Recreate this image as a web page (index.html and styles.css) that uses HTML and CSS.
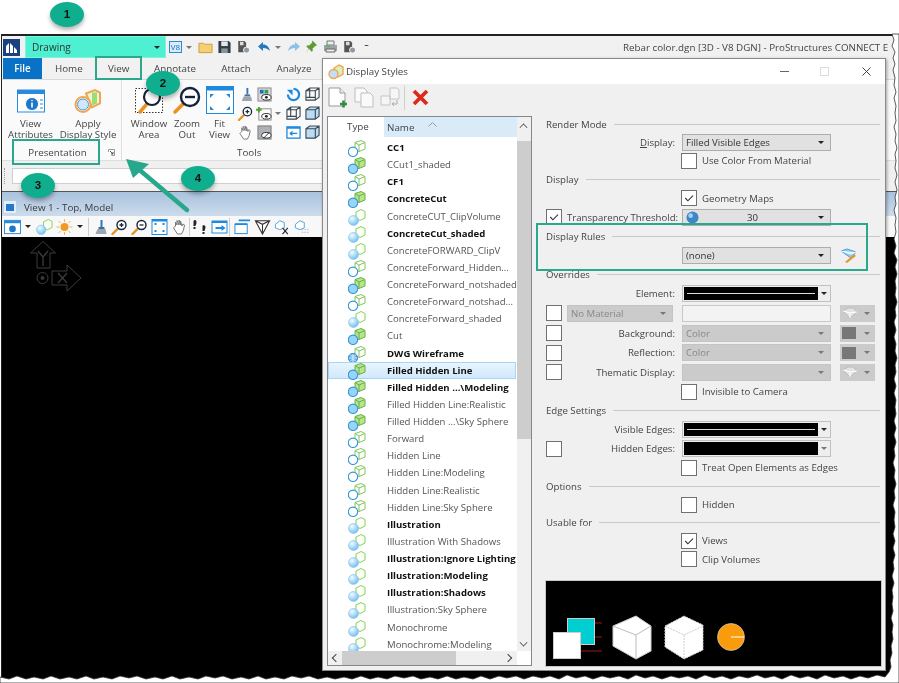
FILE: index.html
```html
<!DOCTYPE html>
<html lang="en">
<head>
<meta charset="utf-8">
<title>Display Styles</title>
<link rel="stylesheet" href="styles.css">
</head>
<body>
<svg class="defs" width="0" height="0">
  <defs>
    <radialGradient id="ball" cx="35%" cy="30%" r="75%"><stop offset="0" stop-color="#f4fbff"/><stop offset="1" stop-color="#6fbdf0"/></radialGradient>
    <symbol id="ds-a" viewBox="0 0 18 17"><path d="M7 2.500 13 .5l4 2v6.500l-6 2.500-4-2zM7 2.500l4 2.500 6-2.500M11 5v6.500" fill="#fff" stroke="#7fc65a"/><circle cx="5" cy="11.800" r="4.700" fill="#fff" stroke="#2f97dc" stroke-width="1.100"/></symbol>
    <symbol id="ds-b" viewBox="0 0 18 17"><path d="M7 2.500 13 .5l4 2v6.500l-6 2.500-4-2z" fill="#b7e58d" stroke="#68b045"/><path d="M7 2.500l4 2.500 6-2.500M11 5v6.500" fill="none" stroke="#68b045"/><circle cx="5" cy="11.800" r="4.700" fill="#9bd3f6" stroke="#2f97dc" stroke-width="1.100"/></symbol>
    <symbol id="ds-c" viewBox="0 0 18 17"><path d="M8 3 13 .5l4 2v6.500l-5 2.500-4-2z" fill="#fbfff6" stroke="#84d05c"/><circle cx="5.500" cy="11.500" r="5" fill="url(#ball)" stroke="#7cc2ee" stroke-width=".6"/></symbol>
    <symbol id="ds-d" viewBox="0 0 18 17"><path d="M7 2.500 13 .5l4 2v6.500l-6 2.500-4-2zM7 2.500l4 2.500 6-2.500M11 5v6.500" fill="#fff" stroke="#7fc65a"/><circle cx="5" cy="12" r="4.600" fill="#5fb0ea" stroke="#1f80c8"/><path d="M.5 12h9M5 7.500v9M2 8.800c2 2 4 2 6 0M2 15.200c2-2 4-2 6 0" fill="none" stroke="#fff" stroke-width=".7"/></symbol>
    <symbol id="gear-doc" viewBox="0 0 16 16"><path d="M2 1h7l2 2v11H2z" fill="#555"/><rect x="4" y="2" width="4" height="4" fill="#ddd"/><circle cx="11.500" cy="11.500" r="3.500" fill="#8f9aa5" stroke="#fff"/></symbol>
    <symbol id="cube-blue" viewBox="0 0 16 16"><path d="M1 4h10v10H1zM1 4l4-3h10v10l-4 3M11 4l4-3" fill="#bcdcf3" stroke="#3a4a55" stroke-width="1.200"/></symbol>
    <symbol id="cube-wire" viewBox="0 0 16 16"><path d="M1 4h10v10H1zM1 4l4-3h10v10l-4 3M11 4l4-3M5 1v10H1M5 11h6" fill="none" stroke="#3a4a55" stroke-width="1.200"/></symbol>
    <symbol id="loupe-plus" viewBox="0 0 16 16"><path d="M1 15l5-5" stroke="#ee8f1e" stroke-width="2.400" stroke-linecap="round"/><circle cx="10" cy="6" r="4.500" fill="#fff" stroke="#14233a" stroke-width="1.400"/><path d="M8 6h4M10 4v4" stroke="#14233a" stroke-width="1.300"/></symbol>
    <symbol id="loupe-minus" viewBox="0 0 16 16"><path d="M1 15l5-5" stroke="#ee8f1e" stroke-width="2.400" stroke-linecap="round"/><circle cx="10" cy="6" r="4.500" fill="#fff" stroke="#14233a" stroke-width="1.400"/><path d="M8 6h4" stroke="#14233a" stroke-width="1.300"/></symbol>
    <symbol id="brush" viewBox="0 0 16 16"><path d="M9 1h2v7H9z" fill="#2a78c2"/><path d="M7 8h6v2H7z" fill="#4a6c8c"/><path d="M6 10h8l1 5H4z" fill="#9aa7b2"/></symbol>
    <symbol id="hand" viewBox="0 0 16 16"><path d="M4 7V3l1.500 3V1.500L7.500 6V1l1.500 5V2l1.500 5 1-2 1.500 1-1 5-2 4H6L2 9z" fill="#fff" stroke="#777" stroke-linejoin="round"/></symbol>
    <symbol id="gem" viewBox="0 0 16 12"><path d="M1 4l5-3h5l4 4-7 6z" fill="#e3e3e3" stroke="#bcbcbc"/><path d="M1 4l7 2 7-1M8 6v5" fill="none" stroke="#fff"/></symbol>
    <symbol id="checkmark" viewBox="0 0 15 15"><path d="M3.500 7.500l2.800 3 5.500-5.500" fill="none" stroke="#333" stroke-width="1.200"/></symbol>
  </defs>
</svg>

<main class="screen">
  <section class="app">
    <header class="titlebar">
      <svg class="logo" viewBox="0 0 17 17"><rect width="17" height="17" fill="#1c3f7d"/><path d="M3 14V7l3-3v10zM7 14V4l3 3v7zM11 14V8l3 3v3z" fill="#fff"/></svg>
      <div class="workflow"><span>Drawing</span><i class="caret dark"></i></div>
      <div class="quick">
        <span class="v8">V8</span><i class="caret"></i>
        <svg class="qi qi-folder" viewBox="0 0 16 14"><path d="M1 3h5l1 1h8v9H1z" fill="#f6cf72" stroke="#c99d3e"/></svg>
        <svg class="qi" viewBox="0 0 15 15"><path d="M1 1h11l2 2v11H1z" fill="#333c45"/><rect x="4" y="1.500" width="7" height="5" fill="#e6e6e6"/><rect x="4" y="9" width="7" height="5" fill="#8b949c"/></svg>
        <svg class="qi"><use href="#gear-doc"/></svg>
        <svg class="qi qi-undo" viewBox="0 0 14 12"><path d="M6 1 1 5.500 6 10V7c3 0 5 1 7 3-1-4-3-6.500-7-6.500z" fill="#2779bd"/></svg><i class="caret"></i>
        <svg class="qi qi-redo" viewBox="0 0 14 12"><path d="M8 1l5 4.500L8 10V7c-3 0-5 1-7 3 1-4 3-6.500 7-6.500z" fill="#8cc0e6"/></svg>
        <svg class="qi qi-pin" viewBox="0 0 14 15"><path d="M8 .5l5 5-2 1-3 3 .5 2-1.500 1-2.500-3L1 14l3-4.500-2.500-2.500 1-1.500 2 .5 3-3z" fill="#5d9b34"/></svg>
        <svg class="qi" viewBox="0 0 15 14"><path d="M4 1h7v4H4z" fill="#eee" stroke="#777"/><path d="M1 5h13v6H1z" fill="#9aa3aa"/><path d="M3 9h9v3H3z" fill="#eee" stroke="#666"/><path d="M3 6h4" stroke="#5fb53f" stroke-width="1.400"/></svg>
        <svg class="qi"><use href="#gear-doc"/></svg>
        <span class="overflow"></span>
      </div>
      <div class="doc-title">Rebar color.dgn [3D - V8 DGN] - ProStructures CONNECT E</div>
    </header>

    <nav class="tabs">
      <span class="tab file">File</span>
      <span class="tab home">Home</span>
      <span class="tab view">View</span>
      <span class="tab annotate">Annotate</span>
      <span class="tab attach">Attach</span>
      <span class="tab analyze">Analyze</span>
    </nav>

    <div class="ribbon">
      <div class="group presentation">
        <div class="group-body">
          <div class="big w56">
            <svg viewBox="0 0 28 25"><rect x=".5" y="1" width="27" height="22" fill="#fff" stroke="#2a8bdc"/><rect x=".5" y="1" width="27" height="4" fill="#2a8bdc"/><circle cx="15" cy="15" r="6.500" fill="#1e78c8" stroke="#fff"/><path d="M15 13.500v5M15 11v1" stroke="#fff" stroke-width="1.600"/><path d="M23 11h3M23 15h3M23 19h3" stroke="#2a8bdc"/></svg>
            <span>View<br>Attributes</span>
          </div>
          <div class="big w59">
            <svg viewBox="0 0 28 26"><path d="M12 5l9-3.500 5 2.500v11l-8 4z" fill="#eaf6d9" stroke="#f2a64f" stroke-width="2"/><path d="M18 4h5v11l-5 2z" fill="#9fdc72"/><circle cx="9" cy="16" r="7.500" fill="#fff" stroke="#f2a64f" stroke-width="2"/><circle cx="9" cy="16" r="5.500" fill="#cfe8fb" stroke="#3e9be0"/></svg>
            <span>Apply<br>Display Style</span>
          </div>
        </div>
        <div class="group-label">Presentation<svg class="launcher" viewBox="0 0 7 7"><path d="M.5 3V.5h6v6H3.500" fill="none" stroke="#999"/><path d="M2 2l3 3M5 3v2H3" fill="none" stroke="#555"/></svg></div>
      </div>
      <div class="group tools">
        <div class="group-body">
          <div class="big w40">
            <svg viewBox="0 0 28 28"><rect x=".5" y="2.500" width="27" height="24" fill="#fff" stroke="#333" stroke-dasharray="1.500 1.500"/><path d="M5 26l6-7" stroke="#ee8f1e" stroke-width="3.500" stroke-linecap="round"/><circle cx="17" cy="11" r="8" fill="#fff" stroke="#14233a" stroke-width="2.200"/></svg>
            <span>Window<br>Area</span>
          </div>
          <div class="big w34">
            <svg viewBox="0 0 28 28"><path d="M2 26l8-8" stroke="#ee8f1e" stroke-width="3.500" stroke-linecap="round"/><circle cx="17" cy="11" r="9" fill="#fff" stroke="#14233a" stroke-width="2.400"/><path d="M12 11h10" stroke="#14233a" stroke-width="2.400"/></svg>
            <span>Zoom<br>Out</span>
          </div>
          <div class="big w32">
            <svg viewBox="0 0 28 28"><rect x=".5" y=".5" width="27" height="27" fill="#fff" stroke="#1e8ade"/><rect x=".5" y=".5" width="27" height="4" fill="#1e8ade"/><path d="M4 8l4 0-4 4zM24 8h-4l4 4zM4 24h4l-4-4zM24 24h-4l4-4z" fill="#1e8ade"/></svg>
            <span>Fit<br>View</span>
          </div>
          <div class="small-grid">
            <svg><use href="#brush"/></svg>
            <svg viewBox="0 0 16 16"><rect x="1" y="1" width="14" height="14" fill="#d9d9d9" stroke="#888"/><rect x="3" y="3" width="4" height="4" fill="#1f6fb5"/><rect x="8" y="3" width="4" height="4" fill="#3d9b58"/><ellipse cx="10" cy="11" rx="5" ry="3" fill="#fff" stroke="#222"/><circle cx="10" cy="11" r="1.500" fill="#222"/></svg>
            <svg><use href="#loupe-plus"/></svg>
            <svg viewBox="0 0 16 16"><rect x="2" y="3" width="13" height="12" fill="#fff" stroke="#888"/><path d="M2 1v6M-1 4h6" stroke="#4ea02c" stroke-width="2"/><ellipse cx="10" cy="11" rx="5" ry="3" fill="#fff" stroke="#222"/><circle cx="10" cy="11" r="1.500" fill="#222"/></svg>
            <svg><use href="#hand"/></svg>
            <svg viewBox="0 0 16 16"><rect x="1" y="1" width="14" height="14" fill="#aeb1b4" stroke="#777"/><ellipse cx="10" cy="11" rx="5" ry="3" fill="#fff" stroke="#222"/><path d="M7 14l6-6" stroke="#222"/></svg>
          </div>
          <i class="caret ribbon-caret"></i>
          <div class="small-grid views">
            <svg viewBox="0 0 16 16"><path d="M8 2a6 6 0 1 1-6 6" fill="none" stroke="#1e8ade" stroke-width="2.400"/><path d="M1 3h6v6z" fill="#1e8ade"/></svg>
            <svg><use href="#cube-wire"/></svg>
            <svg><use href="#cube-wire"/></svg>
            <svg><use href="#cube-blue"/></svg>
            <svg viewBox="0 0 16 16"><rect x="1" y="2" width="14" height="12" fill="#fff" stroke="#1e8ade" stroke-width="1.400"/><rect x="1" y="2" width="14" height="2" fill="#1e8ade"/><path d="M4 9h8M4 9l3-2M4 9l3 2" stroke="#1e8ade" stroke-width="1.400" fill="none"/></svg>
            <svg><use href="#cube-blue"/></svg>
          </div>
        </div>
        <div class="group-label">Tools</div>
      </div>
    </div>

    <div class="command-strip"><span class="grip"></span><div class="command-input"></div></div>

    <div class="view-window">
      <div class="view-title">
        <svg viewBox="0 0 12 12"><rect width="12" height="12" fill="#e3eef8"/><path d="M2 3h8v7H2z" fill="#2578d0"/></svg>
        <span>View 1 - Top, Model</span>
      </div>
      <div class="view-tools">
        <svg class="vt" viewBox="0 0 18 16"><rect x=".5" y="1" width="17" height="14" fill="#fff" stroke="#2a8bdc"/><rect x=".5" y="1" width="17" height="3" fill="#2a8bdc"/><circle cx="9" cy="10" r="3.500" fill="#1e78c8"/></svg><i class="caret dark"></i>
        <svg class="vt"><use href="#ds-c"/></svg>
        <svg class="vt" viewBox="0 0 16 16"><circle cx="8" cy="8" r="4" fill="#f29a21"/><path d="M8 0v3M8 13v3M0 8h3M13 8h3M2 2l2 2M12 12l2 2M14 2l-2 2M2 14l2-2" stroke="#f2b25f"/></svg><i class="caret dark"></i>
        <span class="vsep s1"></span>
        <svg class="vt"><use href="#brush"/></svg>
        <svg class="vt"><use href="#loupe-plus"/></svg>
        <svg class="vt"><use href="#loupe-minus"/></svg>
        <svg class="vt" viewBox="0 0 16 16"><rect x=".5" y=".5" width="15" height="15" fill="#fff" stroke="#1e8ade"/><rect x=".5" y=".5" width="15" height="2" fill="#1e8ade"/><path d="M3 5h2M11 5h2M3 12h2M11 12h2" stroke="#1e8ade" stroke-width="2"/></svg>
        <svg class="vt"><use href="#hand"/></svg>
        <span class="vsep s2"></span>
        <svg class="vt" viewBox="0 0 16 16"><path d="M2 2c1-2 3-1 3 1s-1 3-1 4H2zM2 8h2v2H2zM11 7c0-1 3-1 3 1s-1 3-1 4h-2zM11 13h2v2h-2z" fill="#222"/></svg>
        <svg class="vt" viewBox="0 0 16 16"><rect x=".5" y="2" width="15" height="12" fill="#fff" stroke="#1e8ade"/><rect x=".5" y="2" width="15" height="2" fill="#1e8ade"/><path d="M4 9h7" stroke="#1e8ade" stroke-width="2"/><path d="M10 6l4 3-4 3z" fill="#1e8ade"/></svg>
        <span class="vsep s3"></span>
        <svg class="vt" viewBox="0 0 18 16"><rect x="1" y="5" width="13" height="10" fill="#fff" stroke="#1e8ade"/><path d="M5 1h12M1 5h13" stroke="#1e8ade" stroke-width="2"/></svg>
        <svg class="vt" viewBox="0 0 18 18"><path d="M1 2h16l-8 15zM1 2l8 4 8-4M9 6v11" fill="#fff" stroke="#333" stroke-width="1.200"/></svg>
        <svg class="vt" viewBox="0 0 18 18"><path d="M1 6l5-4 5 2v6l-5 2-5-2z" fill="#fff" stroke="#3e9be0"/><path d="M9 10l6 7M15 10l-6 7" stroke="#222" stroke-width="1.200"/></svg>
        <svg class="vt" viewBox="0 0 18 18"><path d="M1 6l5-4 5 2v6l-5 2-5-2z" fill="#fff" stroke="#3e9be0"/><path d="M8 12h9M8 15h9" stroke="#bbb" stroke-dasharray="2 1"/></svg>
      </div>
      <div class="viewport">
        <svg class="triad" viewBox="0 0 54 52"><g fill="none" stroke="#3c3c3c"><path d="M13 .5 25.500 12H20v15H7V12H.5z"/><path d="M8 10l5 6 5-6M13 16v9" stroke-width="1.300"/><circle cx="12.500" cy="37" r="5.500"/><circle cx="12.500" cy="37" r="1.500" fill="#3c3c3c"/><path d="M22 30h15v-6l14 13-14 13v-6H22z"/><path d="M28 32l9 10M37 32l-9 10" stroke-width="1.300"/></g></svg>
      </div>
    </div>
  </section>

  <section class="dialog">
    <header class="dlg-title">
      <svg viewBox="0 0 16 16"><path d="M6 4l5-3 4 2v7l-5 3z" fill="#d9f0bc" stroke="#f2a64f" stroke-width="1.400"/><circle cx="5.500" cy="10" r="4.500" fill="#bfe1f8" stroke="#f2a64f" stroke-width="1.400"/></svg>
      <span class="dlg-name">Display Styles</span>
      <span class="win-btn min"></span><span class="win-btn max"></span>
      <svg class="win-btn close" viewBox="0 0 9 9"><path d="M.5.500l8 8M8.500.500l-8 8" stroke="#444"/></svg>
    </header>
    <div class="dlg-toolbar">
      <svg viewBox="0 0 20 21"><path d="M1 1h11l5 5v13H1z" fill="#fff" stroke="#9a9a9a"/><path d="M12 1v5h5" fill="#eee" stroke="#9a9a9a"/><path d="M12 17h7M15.500 13.500v7" stroke="#2f8f3b" stroke-width="2.600"/></svg>
      <svg viewBox="0 0 20 21"><path d="M1 1h9l3 3v11H1z" fill="#fafafa" stroke="#bdbdbd"/><path d="M7 6h9l3 3v11H7z" fill="#fafafa" stroke="#bdbdbd"/></svg>
      <svg viewBox="0 0 20 21"><path d="M10 1h7l2 2v9h-9zM1 9h9v9H1z" fill="#f6f6f6" stroke="#c5c5c5"/><path d="M12 17h5v-4M12 17l2-2M12 17l2 2" fill="none" stroke="#aaa"/></svg>
      <span class="tb-sep"></span>
      <svg class="del" viewBox="0 0 17 17"><path d="M2 2l13 13M15 2 2 15" stroke="#dd2a1b" stroke-width="3.800"/></svg>
    </div>
    <div class="dlg-body">
      <div class="style-list">
        <div class="list-main">
          <div class="list-head"><span class="h-type">Type</span><span class="h-name">Name<svg viewBox="0 0 9 5"><path d="M.5 4.500 4.500.5l4 4" fill="none" stroke="#999"/></svg></span></div>
          <ul class="rows">
            <li class="b"><svg><use href="#ds-a"/></svg>CC1</li>
            <li><svg><use href="#ds-b"/></svg>CCut1_shaded</li>
            <li class="b"><svg><use href="#ds-a"/></svg>CF1</li>
            <li class="b"><svg><use href="#ds-b"/></svg>ConcreteCut</li>
            <li><svg><use href="#ds-c"/></svg>ConcreteCUT_ClipVolume</li>
            <li class="b"><svg><use href="#ds-c"/></svg>ConcreteCut_shaded</li>
            <li><svg><use href="#ds-c"/></svg>ConcreteFORWARD_ClipV</li>
            <li><svg><use href="#ds-a"/></svg>ConcreteForward_Hidden...</li>
            <li><svg><use href="#ds-b"/></svg>ConcreteForward_notshaded</li>
            <li><svg><use href="#ds-a"/></svg>ConcreteForward_notshad...</li>
            <li><svg><use href="#ds-c"/></svg>ConcreteForward_shaded</li>
            <li><svg><use href="#ds-b"/></svg>Cut</li>
            <li class="b"><svg><use href="#ds-d"/></svg>DWG Wireframe</li>
            <li class="b sel"><svg><use href="#ds-b"/></svg>Filled Hidden Line</li>
            <li class="b"><svg><use href="#ds-b"/></svg>Filled Hidden ...\Modeling</li>
            <li><svg><use href="#ds-b"/></svg>Filled Hidden Line:Realistic</li>
            <li><svg><use href="#ds-b"/></svg>Filled Hidden ...\Sky Sphere</li>
            <li><svg><use href="#ds-a"/></svg>Forward</li>
            <li><svg><use href="#ds-a"/></svg>Hidden Line</li>
            <li><svg><use href="#ds-a"/></svg>Hidden Line:Modeling</li>
            <li><svg><use href="#ds-a"/></svg>Hidden Line:Realistic</li>
            <li><svg><use href="#ds-a"/></svg>Hidden Line:Sky Sphere</li>
            <li class="b"><svg><use href="#ds-c"/></svg>Illustration</li>
            <li><svg><use href="#ds-c"/></svg>Illustration With Shadows</li>
            <li class="b"><svg><use href="#ds-c"/></svg>Illustration:Ignore Lighting</li>
            <li class="b"><svg><use href="#ds-c"/></svg>Illustration:Modeling</li>
            <li class="b"><svg><use href="#ds-c"/></svg>Illustration:Shadows</li>
            <li><svg><use href="#ds-c"/></svg>Illustration:Sky Sphere</li>
            <li><svg><use href="#ds-c"/></svg>Monochrome</li>
            <li><svg><use href="#ds-c"/></svg>Monochrome:Modeling</li>
          </ul>
        </div>
        <div class="vscroll"><span class="vthumb"></span></div>
        <div class="hscroll"><span class="hthumb"></span></div>
      </div>

      <div class="settings">
        <div class="sec">Render Mode</div>
        <div class="row"><span class="lbl"><u>D</u>isplay:</span><div class="sel-box f">Filled Visible Edges<i class="caret dark"></i></div></div>
        <div class="row"><label class="chk-line f"><span class="cb"></span>Use Color From Material</label></div>
        <div class="sec">Display</div>
        <div class="row"><label class="chk-line f"><span class="cb"><svg><use href="#checkmark"/></svg></span>Geometry Maps</label></div>
        <div class="row"><span class="cb c1"><svg><use href="#checkmark"/></svg></span><span class="lbl">Transparency Threshold:</span><div class="sel-box f center"><svg class="globe" viewBox="0 0 14 14"><circle cx="7" cy="7" r="6.500" fill="#3e86c8"/><circle cx="5" cy="5" r="2.500" fill="#a6d2f2"/></svg>30<i class="caret dark"></i></div></div>
        <div class="sec">Display Rules</div>
        <div class="row"><div class="sel-box f">(none)<i class="caret dark"></i></div>
          <svg class="rule-edit" viewBox="0 0 17 15"><path d="M1 3l6-2 9 3-5 6z" fill="#8fd0f5" stroke="#4c9fd3"/><path d="M1 3l10 3 5-2" fill="#d8f0fc" stroke="#fff"/><path d="M5 14l9-8 2 2-9 7z" fill="#e29a35"/></svg>
        </div>
        <div class="sec">Overrides</div>
        <div class="row"><span class="lbl">Element:</span><div class="line-box f"><span class="swatch lined"></span><i class="caret dark"></i></div></div>
        <div class="row"><span class="cb c1"></span><div class="sel-box dis nomat">No Material<i class="caret"></i></div><div class="blank f"></div><div class="mini"><svg><use href="#gem"/></svg><i class="caret"></i></div></div>
        <div class="row"><span class="cb c1"></span><span class="lbl">Background:</span><div class="sel-box dis f">Color<i class="caret"></i></div><div class="mini"><span class="chip"></span><i class="caret"></i></div></div>
        <div class="row"><span class="cb c1"></span><span class="lbl">Reflection:</span><div class="sel-box dis f">Color<i class="caret"></i></div><div class="mini"><span class="chip"></span><i class="caret"></i></div></div>
        <div class="row"><span class="cb c1"></span><span class="lbl">Thematic Display:</span><div class="sel-box dis f end"><i class="caret"></i></div><div class="mini"><svg><use href="#gem"/></svg><i class="caret"></i></div></div>
        <div class="row"><label class="chk-line f"><span class="cb"></span>Invisible to Camera</label></div>
        <div class="sec">Edge Settings</div>
        <div class="row"><span class="lbl">Visible Edges:</span><div class="line-box f"><span class="swatch lined"></span><i class="caret dark"></i></div></div>
        <div class="row"><span class="cb c1"></span><span class="lbl">Hidden Edges:</span><div class="line-box f"><span class="swatch"></span><i class="caret"></i></div></div>
        <div class="row"><label class="chk-line f"><span class="cb"></span>Treat Open Elements as Edges</label></div>
        <div class="sec">Options</div>
        <div class="row"><label class="chk-line f"><span class="cb"></span>Hidden</label></div>
        <div class="sec">Usable for</div>
        <div class="row"><label class="chk-line f"><span class="cb"><svg><use href="#checkmark"/></svg></span>Views</label></div>
        <div class="row"><label class="chk-line f"><span class="cb"></span>Clip Volumes</label></div>
        <svg class="preview" viewBox="0 0 335 85">
          <rect width="335" height="85" fill="#000"/>
          <path d="M49 42h7M49 56h7M35 70h21" stroke="#a01616"/>
          <rect x="21.500" y="37.500" width="27" height="26" fill="#00cfd1" stroke="#ccc"/>
          <rect x="7.500" y="51.500" width="27" height="26" fill="#fff" stroke="#ccc"/>
          <path d="M67 45l23-10 15 10v25l-15 8-23-13z" fill="#fff" stroke="#ccc"/>
          <path d="M67 45l23 9 15-9M90 54v24" fill="none" stroke="#bbb"/>
          <path d="M119 45l19-10 19 9v25l-19 9-19-12z" fill="#fff" stroke="#ccc" stroke-dasharray="2 1"/>
          <path d="M119 45l19 9 19-9M138 54v24" fill="none" stroke="#ccc" stroke-dasharray="2 1"/>
          <circle cx="185" cy="56" r="13.500" fill="#f89c0e" stroke="#ddd" stroke-width=".6"/>
          <path d="M185 56h13" stroke="#fff"/>
        </svg>
      </div>
    </div>
  </section>

  <svg class="torn" viewBox="0 0 899 683">
    <polygon fill="#fff" stroke="#333" stroke-width=".8" points="892,34 894,40 892,46 895,52 893,58 895,64 893,70 895,78 894,85 896,92 894,98 896,106 895,113 896,121 894,127 896,134 895,141 897,148 895,154 896,161 895,168 897,175 895,182 897,190 895,197 896,204 894,210 896,218 895,225 896,232 894,239 896,246 894,253 897,260 895,267 897,274 895,281 896,288 895,295 897,302 895,309 896,316 894,322 896,330 894,337 896,344 895,351 897,358 895,365 896,372 894,379 896,386 894,393 896,400 895,407 896,414 894,421 896,428 894,435 896,442 894,449 895,456 893,463 895,470 894,477 896,484 894,491 895,498 893,505 895,512 894,520 895,527 893,534 895,541 893,548 895,555 893,562 894,569 892,576 894,583 892,590 893,597 892,604 893,611 891,618 893,625 892,632 893,639 891,646 892,653 890,660 891,667 889,672 885,677 877,675 868,678 860,676 851,679 843,676 834,678 825,675 817,679 808,676 800,678 791,675 782,679 774,676 765,678 757,675 748,678 739,676 731,679 722,676 714,678 705,675 696,679 688,676 679,678 671,676 662,679 653,676 645,678 636,675 628,679 619,676 610,678 602,676 593,679 585,676 576,678 567,675 559,679 550,676 542,678 533,676 524,679 516,676 507,678 499,676 490,679 481,676 473,679 464,677 456,679 447,676 438,679 430,677 421,679 413,676 404,678 395,676 387,679 378,677 370,679 361,676 352,679 344,677 335,679 327,677 318,679 309,676 301,678 292,676 284,679 275,677 266,679 258,676 249,679 241,677 232,679 223,676 215,678 206,676 198,679 189,677 180,679 172,676 163,679 155,677 146,679 137,676 129,678 120,676 112,679 103,677 94,679 86,676 77,679 69,677 60,679 51,676 43,679 34,677 26,679 17,676 9,679 0,677 0,683 899,683 899,34"/>
  </svg>

  <div class="highlight h-view"></div>
  <div class="highlight h-presentation"></div>
  <div class="highlight h-rules"></div>
  <svg class="pointer" viewBox="0 0 70 58"><path d="M63 53 12 10" stroke="#27a88c" stroke-width="4.500" stroke-linecap="round"/><path d="M2 2l23 5L9 21z" fill="#27a88c"/></svg>
  <span class="bubble b1">1</span>
  <span class="bubble b2">2</span>
  <span class="bubble b3">3</span>
  <span class="bubble b4">4</span>
</main>
</body>
</html>
```

FILE: styles.css
```css
* { box-sizing: border-box; }
html, body { margin: 0; padding: 0; background: #fff; }
body { width: 899px; height: 683px; overflow: hidden; font-family: "Open Sans", "Noto Sans", sans-serif; color: #333; }
.defs { position: absolute; }
i { font-style: normal; }
svg { display: block; overflow: visible; }

.screen { position: relative; width: 899px; height: 683px; overflow: hidden; background: #fff; filter: blur(.3px); }

/* application window */
.app { position: absolute; left: 1px; top: 34px; width: 898px; height: 649px; border-top: 2px solid #222; border-left: 1px solid #222; background: #000; display: flex; flex-direction: column; font-size: 9.800px; }
.titlebar { height: 22px; background: #f1f1f1; display: flex; align-items: center; flex: none; }
.logo { width: 17px; height: 17px; margin-left: 1px; flex: none; }
.workflow { width: 141px; height: 22px; margin-left: 5px; padding: 0 5px 0 6px; display: flex; align-items: center; justify-content: space-between; flex: none; font-size: 10px; background: #4df0d0; border: 1px solid #7ef3dc; }
.quick { display: flex; align-items: center; width: 454px; flex: none; margin-left: 3px; }
.v8 { width: 13px; height: 12px; border: 1px solid #2a8bdc; background: #d9ecfb; font-size: 8px; line-height: 10px; text-align: center; color: #1f6fb5; }
.qi { width: 15px; height: 14px; margin-left: 4px; flex: none; }
.qi-folder { margin-left: 6px; }
.qi-undo, .qi-redo { width: 14px; height: 12px; }
.qi-undo { margin-left: 6px; }
.qi-redo { margin-left: 6px; }
.qi-pin { margin-left: 3px; }
.overflow { width: 5px; height: 5px; margin-left: 7px; border-top: 1px solid #333; border-left: 2px solid transparent; border-right: 2px solid transparent; }
.caret { display: inline-block; flex: none; width: 0; height: 0; margin-left: 4px; border-left: 3px solid transparent; border-right: 3px solid transparent; border-top: 3.500px solid #777; }
.caret.dark { border-top-color: #222; }
.doc-title { white-space: nowrap; font-size: 9.800px; color: #444; }

.tabs { height: 22px; background: #f1f1f1; border-bottom: 1px solid #d9d9d9; display: flex; flex: none; font-size: 9.800px; line-height: 22px; color: #444; }
.tab { display: block; text-align: center; }
.file { width: 39px; margin-left: 1px; background: #0a72c6; color: #fff; font-weight: 600; }
.home { width: 27px; margin-left: 13px; }
.view { width: 21px; margin-left: 26px; }
.annotate { width: 42px; margin-left: 25px; }
.attach { width: 30px; margin-left: 25px; }
.analyze { width: 36px; margin-left: 25px; }

.ribbon { height: 81px; background: #fafafa; border-bottom: 1px solid #dedede; display: flex; flex: none; }
.group { display: flex; flex-direction: column; height: 80px; }
.presentation { width: 120px; border-right: 1px solid #dfdfdf; }
.tools { flex: 1; }
.group-body { flex: 1; display: flex; padding-top: 6px; }
.group-label { height: 19px; line-height: 23px; font-size: 9.800px; color: #444; position: relative; white-space: nowrap; }
.presentation .group-label { text-align: center; padding-right: 8px; }
.tools .group-label { padding-left: 115px; }
.launcher { position: absolute; right: 6px; top: 8px; width: 7px; height: 7px; }
.big { display: flex; flex-direction: column; align-items: center; text-align: center; line-height: 11px; font-size: 9.700px; color: #444; white-space: nowrap; flex: none; }
.big svg { width: 28px; height: 28px; margin-bottom: 4px; }
.big span { display: block; }
.presentation .big svg { height: 27px; margin-top: 2px; margin-bottom: 3px; }
.w56 { width: 57px; }
.w59 { width: 58px; }
.w40 { width: 44px; margin-left: 5px; }
.w34 { width: 34px; margin-left: -1px; }
.w32 { width: 33px; margin-left: -1px; }
.small-grid { display: grid; grid-template-columns: 15px 15px; column-gap: 4px; row-gap: 3.500px; padding-top: 1px; margin-left: 2px; }
.small-grid svg { width: 15px; height: 15px; }
.ribbon-caret { margin: 26px 0 0 3px; }
.views { margin-left: 5px; margin-top: 0; }

.command-strip { height: 30px; background: #f0f0f0; display: flex; align-items: center; flex: none; }
.grip { width: 1px; height: 16px; margin-left: 2px; border-left: 1px dotted #999; }
.command-input { width: 313px; height: 16px; margin-left: 7px; background: #fff; border: 1px solid #cfcfcf; }

.view-window { flex: 1; display: flex; flex-direction: column; border-top: 1px solid #555; }
.view-title { height: 24px; background: linear-gradient(#a9c2dd, #cddcec); display: flex; align-items: center; flex: none; padding-top: 6px; font-size: 9.850px; color: #3a3a3a; }
.view-title svg { width: 12px; height: 12px; margin: 0 8px 0 2px; flex: none; }
.view-tools { height: 21px; background: #f8f8f8; display: flex; align-items: center; padding-left: 2px; flex: none; }
.vt { width: 17px; height: 16px; margin-right: 3px; flex: none; }
.view-tools .caret { margin: 0 5px 0 1px; }
.vsep { width: 1px; height: 18px; background: #ccc; flex: none; }
.s1 { margin: 0 2px 0 0; }
.s2 { margin: 0 1px 0 -2px; }
.s3 { margin: 0 4px 0 -2px; }
.viewport { flex: 1; background: #000; padding: 4px 0 0 28px; }
.triad { width: 54px; height: 52px; }

/* dialog */
.dialog { position: absolute; left: 322px; top: 58px; width: 564px; height: 613px; background: #f0f0f0; border: 1px solid #8a8a8a; box-shadow: 1px 1px 3px rgba(0,0,0,.35); display: flex; flex-direction: column; font-size: 9.650px; color: #444; }
.dlg-title { height: 25px; background: #fff; display: flex; align-items: center; flex: none; position: relative; }
.dlg-title > svg:first-child { width: 16px; height: 16px; margin-left: 5px; flex: none; }
.dlg-name { margin-left: 2px; font-size: 9.800px; }
.win-btn { position: absolute; }
.min { left: 457px; top: 12px; width: 9px; height: 1px; background: #666; }
.max { left: 497px; top: 8px; width: 9px; height: 9px; border: 1px solid #ddd; }
.close { left: 539px; top: 8px; width: 9px; height: 9px; }
.dlg-toolbar { height: 27px; display: flex; align-items: center; padding-left: 5px; gap: 6px; flex: none; }
.dlg-toolbar svg { width: 20px; height: 21px; flex: none; }
.dlg-toolbar .del { width: 17px; height: 17px; margin-left: 1px; }
.tb-sep { width: 1px; height: 24px; background: #cfcfcf; margin-left: -2px; }
.dlg-body { flex: 1; display: flex; min-height: 0; padding: 5px 0 3px 4px; }

.style-list { width: 205px; height: 550px; flex: none; border: 1px solid #828790; background: #fff; display: grid; grid-template-columns: 189px 14px; grid-template-rows: 534px 14px; }
.list-main { overflow: hidden; }
.list-head { display: flex; height: 20px; line-height: 19px; font-size: 9.800px; }
.h-type { width: 56px; padding-left: 19px; }
.h-name { flex: 1; background: #d9ebf9; padding-left: 3px; display: flex; align-items: center; gap: 14px; }
.h-name svg { width: 9px; height: 5px; margin-top: -6px; }
.rows { list-style: none; margin: 0; padding: 2px 0 0; }
.rows li { height: 17.140px; line-height: 17px; padding-left: 59px; position: relative; white-space: nowrap; color: #555; font-size: 9.600px; }
.rows li.b { font-weight: 700; color: #111; font-size: 9.600px; }
.rows li svg { position: absolute; left: 20px; top: 1px; width: 18px; height: 17px; }
.rows li.sel { background: linear-gradient(#eaf5fd, #cfe8fb); box-shadow: inset 0 0 0 1px #a9d6f5; margin-right: 1px; }
.vscroll { background: #f0f0f0; padding-top: 24px; position: relative; }
.vthumb { display: block; width: 14px; height: 298px; background: #cdcdcd; }
.vscroll::before { content: ""; position: absolute; left: 3px; top: 7px; width: 6px; height: 6px; border-left: 1px solid #444; border-top: 1px solid #444; transform: rotate(45deg) scale(.8); }
.vscroll::after { content: ""; position: absolute; left: 3px; bottom: 5px; width: 6px; height: 6px; border-right: 1px solid #444; border-bottom: 1px solid #444; transform: rotate(45deg) scale(.8); }
.hscroll { background: #f0f0f0; padding-left: 14px; position: relative; }
.hthumb { display: block; width: 114px; height: 14px; background: #cdcdcd; }
.hscroll::before { content: ""; position: absolute; left: 5px; top: 4px; width: 5px; height: 5px; border-left: 1px solid #444; border-bottom: 1px solid #444; transform: rotate(45deg); }
.hscroll::after { content: ""; position: absolute; right: 6px; top: 4px; width: 5px; height: 5px; border-right: 1px solid #444; border-top: 1px solid #444; transform: rotate(45deg); }

.settings { flex: 1; margin-left: 14px; width: 335px; display: grid; grid-template-rows: 18px 18px 19px 19px 18px 20px 18px 20px 19px 19px 20px 20px 19px 20px 19px 19px 19px 19px 19px 19px 17px 19px 17px 20px 85px; margin-top: -1px; }
.sec { display: flex; align-items: center; gap: 7px; white-space: nowrap; margin-right: 5px; }
.sec::after { content: ""; flex: 1; height: 1px; background: #c9c9c9; }
.row { display: grid; grid-template-columns: 21px 108px 7px 149px 9px 35px; align-items: center; }
.c1 { grid-column: 1; }
.lbl { grid-column: 2; text-align: right; white-space: nowrap; }
.f { grid-column: 4; }
.cb { display: block; width: 16px; height: 16px; background: #fff; border: 1px solid #707070; flex: none; }
.cb svg { width: 14px; height: 14px; }
.chk-line { display: flex; align-items: center; gap: 5px; white-space: nowrap; margin-left: -1px; }
.sel-box { height: 17px; background: #e1e1e1; border: 1px solid #adadad; display: flex; align-items: center; justify-content: space-between; padding: 0 6px 0 3px; color: #333; white-space: nowrap; }
.sel-box.center { justify-content: flex-start; }
.sel-box.end { justify-content: flex-end; }
.center .globe { width: 13px; height: 13px; margin-right: 48px; flex: none; }
.center .caret { margin-left: auto; }
.sel-box.dis { background: #cbcbcb; border-color: #c4c4c4; color: #888; }
.nomat { grid-column: 2; width: 106px; }
.line-box { height: 17px; background: #eee; border: 1px solid #c0c0c0; display: flex; align-items: center; padding: 1px; }
.swatch { flex: 1; height: 13px; background: #000; position: relative; display: block; }
.swatch.lined::after { content: ""; position: absolute; left: 3px; right: 3px; top: 6px; height: 1px; background: #ddd; }
.line-box .caret { margin: 0 2px 0 3px; }
.blank { height: 17px; background: #f3f3f3; border: 1px solid #c8c8c8; }
.mini { grid-column: 6; height: 17px; background: #cbcbcb; display: flex; align-items: center; justify-content: space-between; padding: 0 5px 0 2px; }
.mini svg { width: 16px; height: 12px; }
.chip { width: 14px; height: 12px; background: #777; display: block; }
.rule-edit { grid-column: 6; width: 17px; height: 15px; }
.preview { width: 335px; height: 85px; outline: 1px solid #c8c8c8; margin-top: 12px; }

/* torn paper edge and annotations */
.torn { position: absolute; left: 0; top: 0; width: 899px; height: 683px; pointer-events: none; }
.highlight { position: absolute; border: 2px solid #2aa78d; }
.h-view { left: 95px; top: 56px; width: 47px; height: 24px; }
.h-presentation { left: 12px; top: 139px; width: 88px; height: 26px; }
.h-rules { left: 536px; top: 223px; width: 332px; height: 48px; }
.pointer { position: absolute; left: 124px; top: 157px; width: 70px; height: 58px; }
.bubble { position: absolute; width: 34px; height: 25px; border-radius: 50%; background: #0fae8e; box-shadow: 0 3px 4px rgba(0,0,0,.3); text-align: center; font: 700 11.500px/25px "Liberation Sans", sans-serif; color: #111; }
.b1 { left: 50px; top: 2px; }
.b2 { left: 146px; top: 71px; }
.b3 { left: 21px; top: 173px; }
.b4 { left: 181px; top: 166px; }
```
